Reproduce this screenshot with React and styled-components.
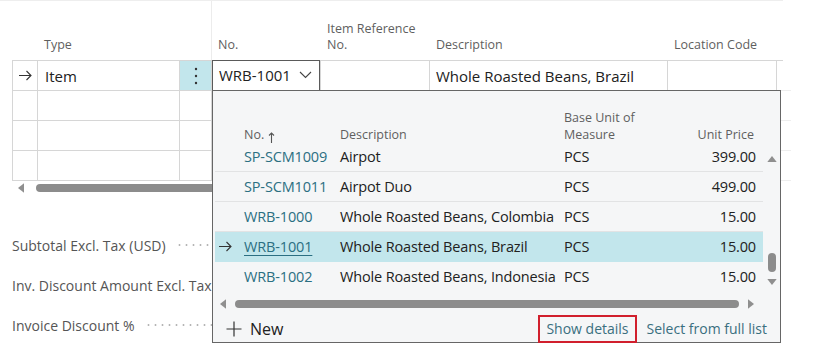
import React from 'react';
import styled, { createGlobalStyle } from 'styled-components';

const GlobalStyle = createGlobalStyle`
  body {
    margin: 0;
    background: #fff;
    font-family: "Open Sans", "Noto Sans", sans-serif;
    color: #212121;
  }
`;

const COLS = '25px 142px 32px 109px 109px 238px 109px 14px';

const Page = styled.div`
  position: relative;
  width: 821px;
  height: 363px;
  overflow: hidden;
  background: #fff;
`;

const Sheet = styled.div`
  width: 783px;
  border-top: 1px solid #eeeeee;
`;

const HeaderRow = styled.div`
  display: grid;
  grid-template-columns: ${COLS};
  margin-left: 12px;
  padding-left: 1px;
  height: 59px;
`;

const HeadCell = styled.div`
  display: flex;
  align-items: flex-end;
  padding: 0 4px 7px 6px;
  font-size: 12.5px;
  line-height: 16px;
  color: #5f5f5f;
  border-right: ${p => (p.$divider ? '1px solid #ececec' : 'none')};
`;

const Grid = styled.div`
  display: grid;
  grid-template-columns: ${COLS};
  grid-auto-rows: 30px;
  margin-left: 12px;
  border-left: 1px solid #d6d6d6;
  border-top: 1px solid #d6d6d6;
`;

const Cell = styled.div`
  display: flex;
  align-items: center;
  padding-left: ${p => p.$pad ?? 6}px;
  font-size: 15px;
  border-right: ${p => (p.$edge ? 'none' : '1px solid #d6d6d6')};
  border-bottom: 1px solid ${p => (p.$edge ? '#eeeeee' : '#d6d6d6')};
  background: ${p => (p.$active ? '#c2e6ec' : 'transparent')};
  justify-content: ${p => (p.$center ? 'center' : 'flex-start')};
`;

const NoInput = styled.div`
  position: relative;
  z-index: 2;
  box-sizing: border-box;
  width: 108px;
  height: 31px;
  margin: -1px 0 0 -6px;
  padding: 0 7px 0 6px;
  display: flex;
  align-items: center;
  justify-content: space-between;
  background: #fff;
  border: 1px solid #5a5a5a;
  font-size: 15px;
`;

const ScrollRow = styled.div`
  display: flex;
  align-items: center;
  height: ${p => p.$h ?? 14}px;
  padding-left: ${p => p.$left}px;
  padding-right: ${p => p.$right ?? 0}px;
  gap: ${p => p.$gap}px;
`;

const Thumb = styled.div`
  height: 8px;
  border-radius: 4px;
  background: #8c8c8c;
  flex: ${p => (p.$grow ? 1 : 'none')};
  width: ${p => p.$w ?? 'auto'};
`;

const Totals = styled.div`
  padding: 30px 0 0 12px;
`;

const TotalRow = styled.div`
  display: flex;
  align-items: center;
  height: 40px;
  width: 420px;
  font-size: 14px;
  color: #555;
`;

const Leader = styled.div`
  flex: 1;
  height: 4px;
  margin-left: 10px;
  background-image: radial-gradient(circle, #b5b5b5 0.9px, transparent 1.2px);
  background-size: 7px 4px;
  background-repeat: repeat-x;
`;

const Popup = styled.div`
  position: absolute;
  left: 212px;
  top: 90px;
  width: 569px;
  height: 253px;
  box-sizing: border-box;
  border: 1px solid #666;
  background: #f5f6f7;
  display: flex;
  flex-direction: column;
  z-index: 3;
`;

const ListArea = styled.div`
  display: flex;
`;

const PCOLS = '27px 96px 224px 95px 108px';

const List = styled.div`
  width: 550px;
`;

const PHead = styled.div`
  display: grid;
  grid-template-columns: ${PCOLS};
  height: 51px;
`;

const PHeadCell = styled.div`
  display: flex;
  align-items: flex-end;
  justify-content: ${p => (p.$right ? 'flex-end' : 'flex-start')};
  padding: 0 ${p => (p.$right ? 9 : 0)}px 0 ${p => (p.$right ? 0 : 4)}px;
  margin-bottom: -1px;
  font-size: 12.5px;
  line-height: 17px;
  color: #5f5f5f;
  gap: 4px;
`;

const PRow = styled.div`
  display: grid;
  grid-template-columns: ${PCOLS};
  height: 30px;
  margin-left: 2px;
  box-sizing: border-box;
  border-bottom: 1px solid ${p => (p.$last ? 'transparent' : '#e2e3e4')};
  background: ${p => (p.$active ? '#c2e6ec' : 'transparent')};
  font-size: 14.5px;
  letter-spacing: -0.15px;
  align-items: center;
`;

const PCell = styled.div`
  padding-left: ${p => (p.$right ? 0 : 2)}px;
  padding-right: ${p => (p.$right ? 9 : 0)}px;
  text-align: ${p => (p.$right ? 'right' : 'left')};
  white-space: nowrap;
  color: ${p => (p.$link ? '#2b6f82' : '#212121')};
  text-decoration: ${p => (p.$under ? 'underline' : 'none')};
  text-underline-offset: 3px;
`;

const ArrowCell = styled.div`
  display: flex;
  align-items: center;
  padding-left: 3px;
`;

const VScroll = styled.div`
  width: 17px;
  display: flex;
  flex-direction: column;
  align-items: center;
  padding: 65px 0 6px;
`;

const VThumb = styled.div`
  width: 8px;
  height: 19px;
  border-radius: 4px;
  background: #8c8c8c;
  margin: 91px 0 7px;
`;

const Footer = styled.div`
  display: flex;
  align-items: center;
  height: 27px;
  padding: 0 5px 0 13px;
`;

const NewButton = styled.div`
  display: flex;
  align-items: center;
  gap: 8px;
  font-size: 16px;
  color: #212121;
`;

const FooterLinks = styled.div`
  margin-left: auto;
  display: flex;
  align-items: center;
  gap: 2px;
`;

const FooterLink = styled.div`
  font-size: 14px;
  line-height: 20px;
  color: #3a6f7f;
  padding: 2px 6px;
  border: 2px solid ${p => (p.$boxed ? '#d11f2d' : 'transparent')};
`;

const Arrow = () => (
  <svg width="14" height="11" viewBox="0 0 14 11">
    <path d="M1 5.5H13M8.5 1L13 5.5L8.5 10" fill="none" stroke="#333" strokeWidth="1.1" />
  </svg>
);

const Kebab = () => (
  <svg width="4" height="18" viewBox="0 0 4 18">
    <circle cx="2" cy="2" r="1.2" fill="#333" />
    <circle cx="2" cy="9" r="1.2" fill="#333" />
    <circle cx="2" cy="16" r="1.2" fill="#333" />
  </svg>
);

const Chevron = () => (
  <svg width="13" height="8" viewBox="0 0 13 8">
    <path d="M1 1L6.5 6.5L12 1" fill="none" stroke="#444" strokeWidth="1.1" />
  </svg>
);

const SortUp = () => (
  <svg width="7" height="11" viewBox="0 0 7 11">
    <path d="M3.5 11V1M1 3.5L3.5 1L6 3.5" fill="none" stroke="#555" strokeWidth="1.1" />
  </svg>
);

const Tri = ({ dir }) => {
  const d = {
    up: 'M0 7L5.5 0L11 7Z',
    down: 'M0 0L5.5 7L11 0Z',
    left: 'M7 0L0 5.5L7 11Z',
    right: 'M0 0L7 5.5L0 11Z',
  }[dir];
  const horiz = dir === 'left' || dir === 'right';
  return (
    <svg width={horiz ? 6 : 10} height={horiz ? 10 : 6} viewBox={horiz ? '0 0 7 11' : '0 0 11 7'}>
      <path d={d} fill="#8f8f8f" />
    </svg>
  );
};

const Plus = () => (
  <svg width="16" height="16" viewBox="0 0 16 16">
    <path d="M8 0.5V15.5M0.5 8H15.5" fill="none" stroke="#333" strokeWidth="1.2" />
  </svg>
);

const items = [
  { no: 'SP-SCM1009', desc: 'Airpot', unit: 'PCS', price: '399.00' },
  { no: 'SP-SCM1011', desc: 'Airpot Duo', unit: 'PCS', price: '499.00' },
  { no: 'WRB-1000', desc: 'Whole Roasted Beans, Colombia', unit: 'PCS', price: '15.00' },
  { no: 'WRB-1001', desc: 'Whole Roasted Beans, Brazil', unit: 'PCS', price: '15.00', active: true },
  { no: 'WRB-1002', desc: 'Whole Roasted Beans, Indonesia', unit: 'PCS', price: '15.00' },
];

const emptyRow = key => (
  <React.Fragment key={key}>
    <Cell />
    <Cell />
    <Cell />
    <Cell />
    <Cell />
    <Cell />
    <Cell />
    <Cell $edge />
  </React.Fragment>
);

export default function App() {
  return (
    <Page>
      <GlobalStyle />
      <Sheet>
        <HeaderRow>
          <HeadCell />
          <HeadCell>Type</HeadCell>
          <HeadCell $divider />
          <HeadCell>No.</HeadCell>
          <HeadCell>Item Reference No.</HeadCell>
          <HeadCell>Description</HeadCell>
          <HeadCell>Location Code</HeadCell>
          <HeadCell />
        </HeaderRow>
        <Grid>
          <Cell $pad={5}><Arrow /></Cell>
          <Cell $pad={7}>Item</Cell>
          <Cell $active $center $pad={0}><Kebab /></Cell>
          <Cell $pad={6}>
            <NoInput>
              WRB-1001
              <Chevron />
            </NoInput>
          </Cell>
          <Cell />
          <Cell $pad={6}>Whole Roasted Beans, Brazil</Cell>
          <Cell />
          <Cell $edge />
          {[1, 2, 3].map(emptyRow)}
        </Grid>
        <ScrollRow $left={18} $gap={12}>
          <Tri dir="left" />
          <Thumb $w="680px" />
        </ScrollRow>
      </Sheet>

      <Totals>
        <TotalRow>
          Subtotal Excl. Tax (USD)
          <Leader />
        </TotalRow>
        <TotalRow>
          Inv. Discount Amount Excl. Tax
          <Leader />
        </TotalRow>
        <TotalRow>
          Invoice Discount %
          <Leader />
        </TotalRow>
      </Totals>

      <Popup>
        <ListArea>
          <List>
            <PHead>
              <PHeadCell />
              <PHeadCell>
                No. <SortUp />
              </PHeadCell>
              <PHeadCell>Description</PHeadCell>
              <PHeadCell>Base Unit of Measure</PHeadCell>
              <PHeadCell $right>Unit Price</PHeadCell>
            </PHead>
            {items.map((it, i) => (
              <PRow key={it.no} $active={it.active} $last={i === items.length - 1 || it.active}>
                <ArrowCell>{it.active && <Arrow />}</ArrowCell>
                <PCell $link $under={it.active}>{it.no}</PCell>
                <PCell>{it.desc}</PCell>
                <PCell>{it.unit}</PCell>
                <PCell $right>{it.price}</PCell>
              </PRow>
            ))}
          </List>
          <VScroll>
            <Tri dir="up" />
            <VThumb />
            <Tri dir="down" />
          </VScroll>
        </ListArea>
        <ScrollRow $h={23} $left={7} $right={26} $gap={9}>
          <Tri dir="left" />
          <Thumb $grow />
          <Tri dir="right" />
        </ScrollRow>
        <Footer>
          <NewButton>
            <Plus />
            New
          </NewButton>
          <FooterLinks>
            <FooterLink $boxed>Show details</FooterLink>
            <FooterLink>Select from full list</FooterLink>
          </FooterLinks>
        </Footer>
      </Popup>
    </Page>
  );
}
